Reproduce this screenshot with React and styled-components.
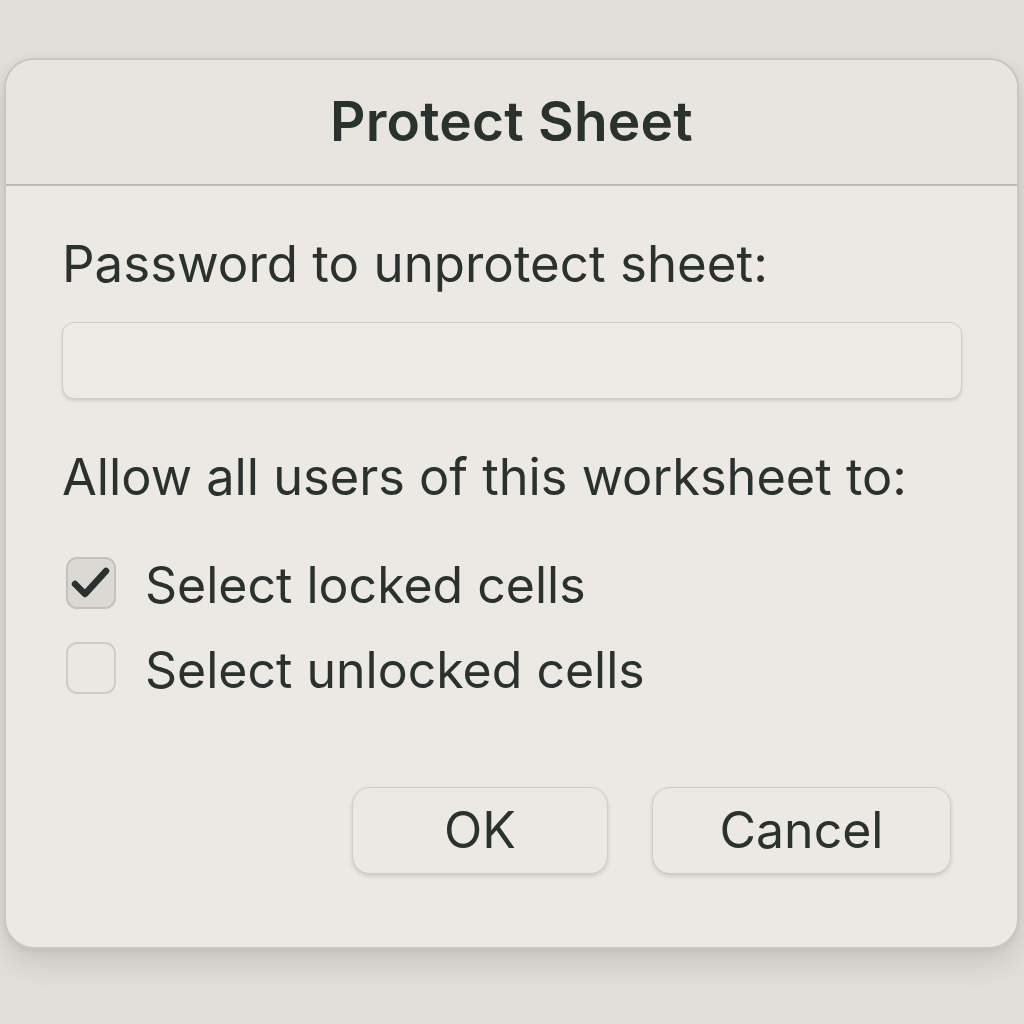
import React, { useState } from 'react'
import styled, { createGlobalStyle } from 'styled-components'

const Global = createGlobalStyle`
  html, body { margin: 0; padding: 0; }
  body {
    background: #e2dfdb;
    font-family: Inter, "Liberation Sans", sans-serif;
    color: #2a322f;
  }
`

const Page = styled.div`
  width: 1024px;
  height: 1024px;
  padding: 58px 5px 0 4px;
  box-sizing: border-box;
`

const Dialog = styled.div`
  height: 891px;
  background: #ece9e5;
  border: 2px solid #c9c6c1;
  border-radius: 30px;
  box-shadow: 0 14px 30px rgba(0, 0, 0, 0.12), 0 2px 6px rgba(0, 0, 0, 0.06);
  box-sizing: border-box;
  overflow: hidden;
`

const Header = styled.div`
  height: 124px;
  display: flex;
  align-items: center;
  justify-content: center;
  border-bottom: 2px solid #bdbab5;
  background: #e8e5e1;
`

const Title = styled.h1`
  margin: 0;
  font-size: 55px;
  font-weight: 600;
  letter-spacing: 0.2px;
  padding-bottom: 2px;
`

const Body = styled.div`
  padding: 52px 56px 0 56px;
  display: flex;
  flex-direction: column;
`

const Label = styled.div`
  font-size: ${p => p.size || 51}px;
  line-height: 52px;
  white-space: nowrap;
  margin-bottom: ${p => p.gap || 0}px;
`

const Input = styled.input`
  width: 900px;
  height: 77px;
  box-sizing: border-box;
  border: 1px solid #cfccc7;
  border-radius: 12px;
  background: #eeebe7;
  box-shadow: 0 2px 3px rgba(0, 0, 0, 0.12);
  margin-bottom: 52px;
  outline: none;
  font-size: 32px;
  padding: 0 16px;
`

const Row = styled.label`
  display: flex;
  align-items: center;
  gap: 29px;
  height: 52px;
  margin-left: 4px;
  margin-bottom: ${p => p.gap || 0}px;
  cursor: pointer;
`

const Box = styled.span`
  width: 50px;
  height: 52px;
  box-sizing: border-box;
  border: 2px solid ${p => (p.on ? '#c4c1bc' : '#cfccc7')};
  border-radius: 11px;
  background: ${p => (p.on ? '#dcd9d4' : '#ebe8e4')};
  display: flex;
  align-items: center;
  justify-content: center;
  flex-shrink: 0;
`

const RowText = styled.span`
  font-size: 50px;
  white-space: nowrap;
  padding-top: 4px;
`

const Footer = styled.div`
  display: flex;
  justify-content: flex-end;
  gap: 44px;
  margin-top: 93px;
  padding-right: 10px;
`

const Button = styled.button`
  width: ${p => p.w}px;
  height: 87px;
  border: 1px solid #d0cdc8;
  border-radius: 18px;
  background: #ece9e5;
  box-shadow: 0 2px 4px rgba(0, 0, 0, 0.15);
  font-family: inherit;
  font-size: 50px;
  color: #2a322f;
  cursor: pointer;
  padding: 0 0 2px 0;
`

const Check = () => (
  <svg width="42" height="36" viewBox="0 0 42 36">
    <path d="M5 19 L15 29 L36 6" fill="none" stroke="#2a322f" strokeWidth="6.5" strokeLinecap="round" strokeLinejoin="round" />
  </svg>
)

export default function App() {
  const [locked, setLocked] = useState(true)
  const [unlocked, setUnlocked] = useState(false)
  return (
    <Page>
      <Global />
      <Dialog>
        <Header>
          <Title>Protect Sheet</Title>
        </Header>
        <Body>
          <Label gap={32}>Password to unprotect sheet:</Label>
          <Input type="password" />
          <Label size={50.5} gap={54}>Allow all users of this worksheet to:</Label>
          <Row gap={33} onClick={() => setLocked(!locked)}>
            <Box on={locked}>{locked && <Check />}</Box>
            <RowText>Select locked cells</RowText>
          </Row>
          <Row onClick={() => setUnlocked(!unlocked)}>
            <Box on={unlocked}>{unlocked && <Check />}</Box>
            <RowText>Select unlocked cells</RowText>
          </Row>
          <Footer>
            <Button w={256}>OK</Button>
            <Button w={299}>Cancel</Button>
          </Footer>
        </Body>
      </Dialog>
    </Page>
  )
}
